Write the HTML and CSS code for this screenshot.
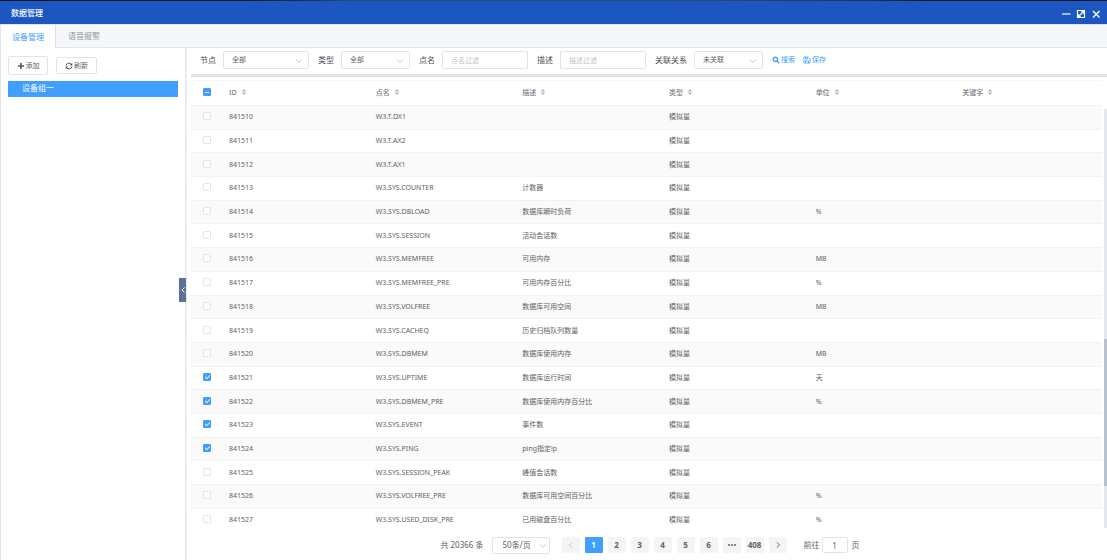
FILE: index.html
```html
<!DOCTYPE html>
<html lang="zh-CN">
<head>
<meta charset="utf-8">
<title>数据管理</title>
<link rel="stylesheet" href="styles.css">
</head>
<body>
<svg class="sprite" aria-hidden="true">
  <symbol id="sort" viewBox="0 0 6 8"><path d="M3 1 5.4 3.5H.6zM3 7 .6 4.5h4.8z" fill="#b4b8c0"/></symbol>
  <symbol id="down" viewBox="0 0 8 8"><path d="M1 2.5 4 5.5 7 2.5" fill="none" stroke="#c0c4cc"/></symbol>
</svg>
<div class="backdrop"></div>
<div class="window">
  <header class="titlebar">
    <h1>数据管理</h1>
    <div class="window-tools">
      <button type="button" aria-label="最小化"><svg viewBox="0 0 10 10"><path d="M1 5h8.500" stroke="#fff" stroke-width="1.200"/></svg></button>
      <button type="button" aria-label="最大化"><svg viewBox="0 0 10 10"><path d="M1.500 1.500h7v7h-7z" fill="none" stroke="#fff" stroke-width="1.200"/><path d="M4.800 2h3.200v3.200zM2 4.800v3.200h3.200z" fill="#fff"/><path d="M3.500 6.500l3-3" stroke="#fff" stroke-width="1.200"/></svg></button>
      <button type="button" aria-label="关闭"><svg viewBox="0 0 10 10"><path d="M2 2l6.500 6.500M8.500 2 2 8.500" stroke="#fff" stroke-width="1.400"/></svg></button>
    </div>
  </header>
  <nav class="tabs">
    <button type="button" class="tab active">设备管理</button>
    <button type="button" class="tab">语音报警</button>
  </nav>
  <div class="content">
    <aside class="side">
      <div class="side-tools">
        <button type="button" class="btn btn-add"><svg viewBox="0 0 8 8"><path d="M4 1v6M1 4h6" stroke="#555" stroke-width="1.600"/></svg>添加</button>
        <button type="button" class="btn"><svg viewBox="0 0 8 8"><path d="M1 3.500A3 3 0 0 1 6.500 2.500M7 4.500A3 3 0 0 1 1.500 5.500" fill="none" stroke="#555"/><path d="M7.300.7v2.700H4.600zM.7 7.300V4.600h2.700z" fill="#555"/></svg>刷新</button>
      </div>
      <ul class="tree"><li class="selected">设备组一</li></ul>
      <button type="button" class="collapse" aria-label="收起"><svg viewBox="0 0 6 8"><path d="M4.500 1.500 2 4l2.500 2.500" fill="none" stroke="#fff"/></svg></button>
    </aside>
    <main class="main">
      <form class="filters">
        <label for="node">节点</label>
        <span class="select wide"><select id="node"><option>全部</option></select><svg><use href="#down"/></svg></span>
        <label for="type">类型</label>
        <span class="select"><select id="type"><option>全部</option></select><svg><use href="#down"/></svg></span>
        <label for="name">点名</label>
        <input type="text" id="name" placeholder="点名过滤">
        <label for="desc">描述</label>
        <input type="text" id="desc" placeholder="描述过滤">
        <label for="relation">关联关系</label>
        <span class="select"><select id="relation"><option>未关联</option></select><svg><use href="#down"/></svg></span>
        <button type="button" class="link"><svg viewBox="0 0 8 8"><circle cx="3.300" cy="3.300" r="2.200" fill="none" stroke="#409eff" stroke-width="1.300"/><path d="M5 5 7.200 7.200" stroke="#409eff" stroke-width="1.500"/></svg>搜索</button>
        <button type="button" class="link"><svg viewBox="0 0 8 8"><path d="M1 1h4.500L7 2.500V7H1z" fill="none" stroke="#409eff" stroke-width=".8"/><path d="M2.500 1v1.800h2V1M2.500 7V4.800h3V7" fill="none" stroke="#409eff" stroke-width=".8"/></svg>保存</button>
      </form>
      <div class="table-area">
        <div class="table-clip">
          <table>
            <colgroup><col class="col-check"><col span="6"></colgroup>
            <thead>
              <tr>
                <th><input type="checkbox" class="partial" aria-label="全选"></th>
                <th>ID<svg><use href="#sort"/></svg></th>
                <th>点名<svg><use href="#sort"/></svg></th>
                <th>描述<svg><use href="#sort"/></svg></th>
                <th>类型<svg><use href="#sort"/></svg></th>
                <th>单位<svg><use href="#sort"/></svg></th>
                <th>关键字<svg><use href="#sort"/></svg></th>
              </tr>
            </thead>
            <tbody>
              <tr><td><input type="checkbox" aria-label="841510"></td><td>841510</td><td>W3.T.DX1</td><td></td><td>模拟量</td><td></td><td></td></tr>
              <tr><td><input type="checkbox" aria-label="841511"></td><td>841511</td><td>W3.T.AX2</td><td></td><td>模拟量</td><td></td><td></td></tr>
              <tr><td><input type="checkbox" aria-label="841512"></td><td>841512</td><td>W3.T.AX1</td><td></td><td>模拟量</td><td></td><td></td></tr>
              <tr><td><input type="checkbox" aria-label="841513"></td><td>841513</td><td>W3.SYS.COUNTER</td><td>计数器</td><td>模拟量</td><td></td><td></td></tr>
              <tr><td><input type="checkbox" aria-label="841514"></td><td>841514</td><td>W3.SYS.DBLOAD</td><td>数据库瞬时负荷</td><td>模拟量</td><td>%</td><td></td></tr>
              <tr><td><input type="checkbox" aria-label="841515"></td><td>841515</td><td>W3.SYS.SESSION</td><td>活动会话数</td><td>模拟量</td><td></td><td></td></tr>
              <tr><td><input type="checkbox" aria-label="841516"></td><td>841516</td><td>W3.SYS.MEMFREE</td><td>可用内存</td><td>模拟量</td><td>MB</td><td></td></tr>
              <tr><td><input type="checkbox" aria-label="841517"></td><td>841517</td><td>W3.SYS.MEMFREE_PRE</td><td>可用内存百分比</td><td>模拟量</td><td>%</td><td></td></tr>
              <tr><td><input type="checkbox" aria-label="841518"></td><td>841518</td><td>W3.SYS.VOLFREE</td><td>数据库可用空间</td><td>模拟量</td><td>MB</td><td></td></tr>
              <tr><td><input type="checkbox" aria-label="841519"></td><td>841519</td><td>W3.SYS.CACHEQ</td><td>历史归档队列数量</td><td>模拟量</td><td></td><td></td></tr>
              <tr><td><input type="checkbox" aria-label="841520"></td><td>841520</td><td>W3.SYS.DBMEM</td><td>数据库使用内存</td><td>模拟量</td><td>MB</td><td></td></tr>
              <tr><td><input type="checkbox" aria-label="841521" checked></td><td>841521</td><td>W3.SYS.UPTIME</td><td>数据库运行时间</td><td>模拟量</td><td>天</td><td></td></tr>
              <tr><td><input type="checkbox" aria-label="841522" checked></td><td>841522</td><td>W3.SYS.DBMEM_PRE</td><td>数据库使用内存百分比</td><td>模拟量</td><td>%</td><td></td></tr>
              <tr><td><input type="checkbox" aria-label="841523" checked></td><td>841523</td><td>W3.SYS.EVENT</td><td>事件数</td><td>模拟量</td><td></td><td></td></tr>
              <tr><td><input type="checkbox" aria-label="841524" checked></td><td>841524</td><td>W3.SYS.PING</td><td>ping指定ip</td><td>模拟量</td><td></td><td></td></tr>
              <tr><td><input type="checkbox" aria-label="841525"></td><td>841525</td><td>W3.SYS.SESSION_PEAK</td><td>峰值会话数</td><td>模拟量</td><td></td><td></td></tr>
              <tr><td><input type="checkbox" aria-label="841526"></td><td>841526</td><td>W3.SYS.VOLFREE_PRE</td><td>数据库可用空间百分比</td><td>模拟量</td><td>%</td><td></td></tr>
              <tr><td><input type="checkbox" aria-label="841527"></td><td>841527</td><td>W3.SYS.USED_DISK_PRE</td><td>已用磁盘百分比</td><td>模拟量</td><td>%</td><td></td></tr>
            </tbody>
          </table>
        </div>
        <div class="scrollbar"><div class="thumb"></div></div>
      </div>
      <footer class="pager">
        <span class="total">共 20366 条</span>
        <span class="select size"><select aria-label="每页条数"><option>50条/页</option></select><svg><use href="#down"/></svg></span>
        <div class="pages">
          <button type="button" disabled aria-label="上一页"><svg viewBox="0 0 8 8"><path d="M5 1.500 2.500 4 5 6.500" fill="none" stroke="#c0c4cc"/></svg></button>
          <button type="button" class="current">1</button>
          <button type="button">2</button>
          <button type="button">3</button>
          <button type="button">4</button>
          <button type="button">5</button>
          <button type="button">6</button>
          <button type="button" aria-label="更多"><svg viewBox="0 0 8 8"><path d="M0 4h2M3 4h2M6 4h2" stroke="#606266" stroke-width="1.500"/></svg></button>
          <button type="button">408</button>
          <button type="button" aria-label="下一页"><svg viewBox="0 0 8 8"><path d="M3 1.500 5.500 4 3 6.500" fill="none" stroke="#606266"/></svg></button>
        </div>
        <label class="jump">前往<input type="text" value="1">页</label>
      </footer>
    </main>
  </div>
</div>
</body>
</html>
```
FILE: styles.css
```css
* { box-sizing: border-box; }

body {
  margin: 0;
  height: 100vh;
  display: flex;
  flex-direction: column;
  overflow: hidden;
  background: #fff;
  color: #606266;
  font: 8px/12px "Noto Sans", "Noto Sans CJK SC", sans-serif;
}

button, input, select { font: inherit; color: inherit; margin: 0; }
button { display: flex; align-items: center; justify-content: center; padding: 0; border: 0; background: none; cursor: pointer; }
svg { width: 8px; height: 8px; flex: none; }
.sprite { position: absolute; width: 0; height: 0; }

.backdrop { flex: none; height: 1px; background: linear-gradient(90deg, #0a1420, #0a1420 22%, #24536a 32%, #2a5266 60%, #1a3c4a 78%, #0a1420 84%); }
.window { flex: 1; min-height: 0; display: flex; flex-direction: column; }

.titlebar { flex: none; height: 23px; padding: 0 6px 0 11px; display: flex; align-items: center; justify-content: space-between; background: #1c57c1; color: #fff; }
.titlebar h1 { margin: 0; font-size: 8px; font-weight: 500; }
.window-tools { display: flex; gap: 5px; padding-top: 3px; }
.window-tools svg { width: 10px; height: 10px; }

.tabs { flex: none; height: 24px; display: flex; background: #f5f7fa; border: 1px solid #e1e5ee; border-right: 0; }
.tab { padding: 0 12px; color: #909399; }
.tab.active { margin-bottom: -1px; padding: 0 11px; background: #fff; color: #409eff; border-right: 1px solid #dcdfe6; }

.content { flex: 1; min-height: 0; display: flex; }

.side { position: relative; flex: none; width: 187px; padding: 8px 8px 0 7px; border-left: 1px solid #e1e5ee; border-right: 2px solid #ececf1; }
.side-tools { display: flex; align-items: center; gap: 8px; }
.btn { width: 41px; height: 17px; gap: 1px; font-size: 7px; border: 1px solid #e0e3ea; border-radius: 2px; background: #fff; }
.btn-add { width: 40px; height: 19px; }
.tree { list-style: none; margin: 6px -1px 0 0; padding: 0; }
.tree .selected { height: 16px; padding-left: 14px; line-height: 14px; background: #409eff; color: #fff; }
.collapse { position: absolute; right: -1px; top: calc(50% - 26px); width: 7px; height: 24px; background: #5b7199; }
.collapse svg { width: 6px; }

.main { flex: 1; min-width: 0; margin-left: 4px; display: flex; flex-direction: column; }

.filters { flex: none; height: 29px; margin-bottom: 3px; padding: 0 9px 2px; display: flex; align-items: center; border-bottom: 3px solid #e1e1e1; }
.filters label { margin-right: 7px; color: #4c4e52; }
.filters > input, .filters .select { margin-right: 9px; }
.filters > input, .select select { height: 18px; padding: 0 8px; font-size: 7px; border: 1px solid #e0e3ea; border-radius: 2px; background: #fff; outline: 0; }
.filters > input { width: 86px; }
.filters > input::placeholder { color: #c0c4cc; }
.select { position: relative; width: 69px; }
.select.wide { width: 86px; }
.select select { display: block; width: 100%; appearance: none; }
.select svg { position: absolute; right: 6px; top: 6px; pointer-events: none; }
.link { gap: 1px; margin-right: 8px; font-size: 7px; color: #409eff; }

.table-area { flex: 1; min-height: 0; display: flex; }
.table-clip { flex: 1; overflow: hidden; }
table { width: 100%; height: 101%; table-layout: fixed; border-collapse: separate; border-spacing: 0; font-size: 7px; line-height: 10px; }
.col-check { width: 31px; }
th, td { padding: 0 7px; text-align: left; white-space: nowrap; border-bottom: 1px solid #f0f2f6; }
th { height: 26px; font-weight: 500; color: #7d8087; border-top: 1px solid #f5f5f7; }
th svg { width: 6px; margin-left: 4px; vertical-align: -1px; }
th:first-child, td:first-child { padding: 0 0 2px 12px; }
tbody tr:nth-child(odd) { background: #fafafa; }

input[type="checkbox"] { position: relative; display: block; width: 8px; height: 8px; appearance: none; border: 1px solid #e2e5ea; border-radius: 1px; background: #fff; }
input[type="checkbox"]:checked, input.partial[type="checkbox"] { background: #409eff; border-color: #409eff; }
input[type="checkbox"]:checked::after { content: ""; position: absolute; left: 2px; top: 0; width: 2px; height: 4px; border: solid #d9ebff; border-width: 0 1px 1px 0; transform: rotate(45deg); }
input.partial::after { content: ""; position: absolute; left: 1px; top: 3px; width: 4px; height: 1px; background: #cfe6ff; }

.scrollbar { flex: none; width: 3px; margin: 29px 0 0 2px; background: #e4e7ec; }
.scrollbar::before { content: ""; display: block; height: 55%; }
.thumb { height: 35%; background: #b8c0cc; }

.pager { flex: none; height: 32px; padding: 2px 0 0 2px; display: flex; align-items: center; justify-content: center; }
.total { margin-right: 8px; }
.select.size { width: 58px; margin-right: 12px; }
.size select { height: 17px; padding: 0 10px; font-size: 8px; }
.size svg { right: 3px; top: 5px; }
.pages { display: flex; gap: 5px; margin-right: 17px; }
.pages button { min-width: 18px; height: 16px; font-weight: 700; border-radius: 1px; background: #f4f4f5; }
.pages .current { background: #409eff; color: #fff; }
.jump { display: flex; align-items: center; }
.jump input { width: 26px; height: 16px; margin: 0 4px 0 2px; padding: 0; text-align: center; border: 1px solid #e0e3ea; border-radius: 2px; }
```
